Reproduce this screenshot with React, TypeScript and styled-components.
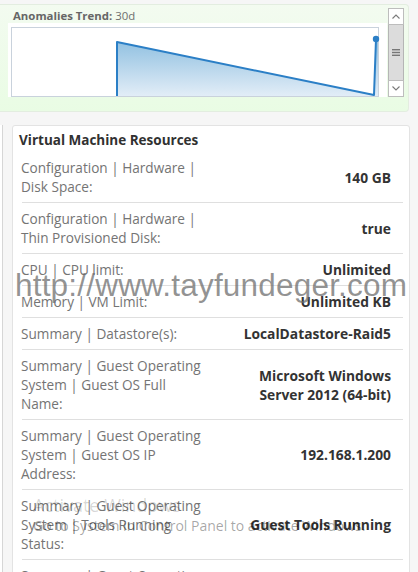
import React from 'react'
import styled, { createGlobalStyle } from 'styled-components'

const GlobalStyle = createGlobalStyle`
  html, body {
    margin: 0;
    padding: 0;
    background: #f6f6f6;
    overflow: hidden;
  }
  body {
    font-family: 'Open Sans', 'Noto Sans', sans-serif;
  }
`

const Page = styled.div`
  position: relative;
  width: 418px;
  height: 572px;
  overflow: hidden;
  padding-top: 4px;
  box-sizing: border-box;
`

// ---- anomalies trend widget ----

const TrendPanel = styled.div`
  width: 409px;
  height: 108px;
  box-sizing: border-box;
  display: flex;
  gap: 1px;
  padding: 3px 3px 14px 8px;
  background: linear-gradient(180deg, #f3fbf0 0%, #e9fce4 100%);
  border: 1px solid #e3ede0;
  border-left: none;
  border-radius: 0 4px 4px 0;
`

const TrendMain = styled.div`
  display: flex;
  flex-direction: column;
  width: 379px;
`

const TrendTitle = styled.div`
  height: 15px;
  padding-left: 5px;
  font-size: 11.4px;
  line-height: 15px;
  color: #6e6e6e;

  b {
    font-weight: 700;
    color: #666;
  }
`

const ChartBox = styled.div`
  height: 74px;
  background: #fff;

  svg {
    display: block;
  }
`

const ScrollBar = styled.div`
  width: 16px;
  height: 89px;
  display: flex;
  flex-direction: column;
  box-sizing: border-box;
`

const ScrollButton = styled.div`
  height: 17px;
  box-sizing: border-box;
  border: 1px solid #bdbdbd;
  background: #fff;
  display: flex;
  align-items: center;
  justify-content: center;
  color: #8a8a8a;
`

const ScrollThumb = styled.div`
  flex: 1;
  box-sizing: border-box;
  border: 1px solid #b5b5b5;
  border-top: none;
  border-bottom: none;
  background: #dcdcdc;
  display: flex;
  align-items: center;
  justify-content: center;
`

const Chevron = ({ up }: { up?: boolean }) => (
  <svg width="8" height="5" viewBox="0 0 8 5">
    <path
      d={up ? 'M0.5 4.5 L4 1 L7.5 4.5' : 'M0.5 0.5 L4 4 L7.5 0.5'}
      fill="none"
      stroke="#7a7a7a"
      strokeWidth="1.1"
    />
  </svg>
)

const Grip = () => (
  <svg width="8" height="7" viewBox="0 0 8 7">
    <rect x="0" y="0" width="8" height="1.4" fill="#777" />
    <rect x="0" y="2.8" width="8" height="1.4" fill="#777" />
    <rect x="0" y="5.6" width="8" height="1.4" fill="#777" />
  </svg>
)

const TrendChart = () => (
  <svg width="379" height="74" viewBox="0 0 379 74">
    <defs>
      <linearGradient id="trendFill" x1="0" y1="0" x2="0" y2="1">
        <stop offset="0" stopColor="#8ebfe0" />
        <stop offset="1" stopColor="#e2edf7" />
      </linearGradient>
    </defs>
    <rect x="3.5" y="4.5" width="367" height="69" fill="#fff" stroke="#c9d2dc" />
    <polygon points="109,73 109,19 366,72 368,16 370,16 370,73" fill="url(#trendFill)" />
    <polyline
      points="109,73 109,19 366,72 368,16"
      fill="none"
      stroke="#2b7fc6"
      strokeWidth="2"
      strokeLinejoin="round"
    />
    <circle cx="368" cy="16" r="3.2" fill="#2b7fc6" />
  </svg>
)

// ---- resources card ----

const Lower = styled.div`
  display: flex;
  margin-top: 13px;
`

const SideStub = styled.div`
  width: 2px;
  height: 460px;
  border-right: 1px solid #d6d6d6;
  background: #fff;
`

const Card = styled.div`
  margin-left: 9px;
  width: 398px;
  box-sizing: border-box;
  background: #fff;
  border: 1px solid #e3e3e3;
  border-radius: 3px;
  padding: 5px 6px 0 6px;
`

const CardTitle = styled.div`
  font-size: 13.5px;
  font-weight: 700;
  line-height: 18px;
  color: #313131;
  margin-bottom: 3px;
`

const RowList = styled.div`
  padding-left: 3px;
`

const Row = styled.div`
  display: flex;
  align-items: center;
  padding: 6px 12px 6px 0;
  border-bottom: 1px solid #dfdfdf;
  line-height: 19px;
`

const Label = styled.div`
  width: 188px;
  flex-shrink: 0;
  margin-left: -1px;
  font-size: 13.6px;
  color: #747474;
`

const Value = styled.div`
  flex: 1;
  display: flex;
  justify-content: flex-end;

  span {
    max-width: 150px;
    text-align: right;
    font-size: 13.8px;
    font-weight: 700;
    color: #333;
  }
`

// ---- overlays ----

const SiteMark = styled.div`
  position: absolute;
  left: 15px;
  top: 267px;
  font-family: 'Liberation Sans', Arial, sans-serif;
  font-size: 31.5px;
  letter-spacing: 0.2px;
  line-height: 36px;
  color: rgba(105, 105, 105, 0.72);
  white-space: nowrap;
  pointer-events: none;
`

const ActivateMark = styled.div`
  position: absolute;
  left: 33px;
  top: 493px;
  color: rgba(0, 0, 0, 0.36);
  pointer-events: none;
  white-space: nowrap;

  div:first-child {
    font-size: 18px;
    line-height: 24px;
    color: rgba(0, 0, 0, 0.16);
  }
  div:last-child {
    font-size: 14px;
    line-height: 18px;
  }
`

const resources = [
  { label: 'Configuration | Hardware | Disk Space:', value: '140 GB' },
  { label: 'Configuration | Hardware | Thin Provisioned Disk:', value: 'true' },
  { label: 'CPU | CPU limit:', value: 'Unlimited' },
  { label: 'Memory | VM Limit:', value: 'Unlimited KB' },
  { label: 'Summary | Datastore(s):', value: 'LocalDatastore-Raid5' },
  { label: 'Summary | Guest Operating System | Guest OS Full Name:', value: 'Microsoft Windows Server 2012 (64-bit)' },
  { label: 'Summary | Guest Operating System | Guest OS IP Address:', value: '192.168.1.200' },
  { label: 'Summary | Guest Operating System | Tools Running Status:', value: 'Guest Tools Running' },
  { label: 'Summary | Guest Operating System | Tools Version Status:', value: 'Current' },
]

const App = () => (
  <Page>
    <GlobalStyle />
    <TrendPanel>
      <TrendMain>
        <TrendTitle>
          <b>Anomalies Trend:</b> 30d
        </TrendTitle>
        <ChartBox>
          <TrendChart />
        </ChartBox>
      </TrendMain>
      <ScrollBar>
        <ScrollButton>
          <Chevron up />
        </ScrollButton>
        <ScrollThumb>
          <Grip />
        </ScrollThumb>
        <ScrollButton>
          <Chevron />
        </ScrollButton>
      </ScrollBar>
    </TrendPanel>

    <Lower>
      <SideStub />
      <Card>
        <CardTitle>Virtual Machine Resources</CardTitle>
        <RowList>
          {resources.map((r) => (
            <Row key={r.label}>
              <Label>{r.label}</Label>
              <Value>
                <span>{r.value}</span>
              </Value>
            </Row>
          ))}
        </RowList>
      </Card>
    </Lower>

    <SiteMark>http://www.tayfundeger.com</SiteMark>
    <ActivateMark>
      <div>Activate Windows</div>
      <div>Go to System in Control Panel to activate Windows.</div>
    </ActivateMark>
  </Page>
)

export default App
